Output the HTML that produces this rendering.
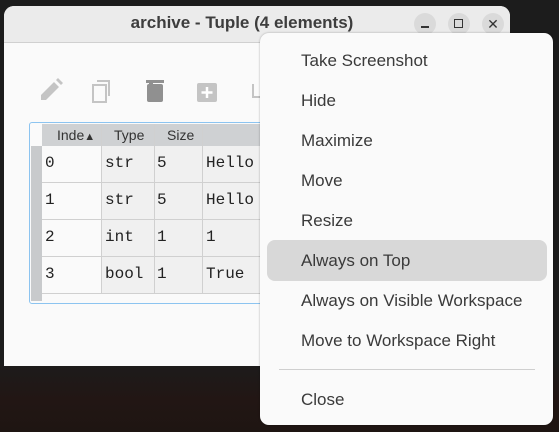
<!DOCTYPE html>
<html><head><style>
body{margin:0;width:559px;height:432px;overflow:hidden;background:linear-gradient(#1c1c1c 0,#1c1c1c 360px,#221614 400px,#1e1512 432px);font-family:"Liberation Sans",sans-serif;position:relative}
.win{position:absolute;left:4px;top:6px;width:506px;height:360px;background:#fafafa;border-radius:10px 10px 0 0;overflow:hidden}
.tb{height:36px;background:#ebebeb;border-bottom:1px solid #d0d0d0;text-align:center;font-weight:bold;font-size:17px;color:#3d3d3d;line-height:34px;padding-right:30px}
.btn{position:absolute;top:7px;width:22px;height:22px;border-radius:50%;background:#dadada}
.tbl{position:absolute;left:25px;top:116px;width:300px;height:180px;border:1px solid #8cc4f0;border-radius:3px;background:#fafafa}
.cell{position:absolute;font-family:"Liberation Mono",monospace;font-size:16px;color:#222}
.menu{position:absolute;left:260px;top:33px;width:293px;height:392px;background:#fafafa;border-radius:9px;box-shadow:0 0 2px rgba(0,0,0,.3)}
.mi{position:absolute;left:41px;font-size:17px;color:#3a3a3a}
.hd{position:absolute;top:4px;font-size:14px;color:#333}
</style></head><body>
<div class="win">
<div class="tb">archive - Tuple (4 elements)</div>
<div class="btn" style="left:410px"><div style="position:absolute;left:7px;top:13px;width:8px;height:1.5px;background:#333"></div></div>
<div class="btn" style="left:444px"><div style="position:absolute;left:6px;top:6px;width:7px;height:7px;border:1.5px solid #333"></div></div>
<div class="btn" style="left:478px;text-align:center;line-height:22px;font-size:14px;color:#333">✕</div>
<svg style="position:absolute;left:36px;top:72px" width="230" height="26">
<path d="M1 22 L1 17 L14 4 L19 9 L6 22 Z M16 2 L18 0 L23 5 L21 7 Z" fill="#c4c4c4"/>
<rect x="53" y="7" width="13" height="17" fill="none" stroke="#c4c4c4" stroke-width="2"/>
<path d="M57 3 H69 V18" fill="none" stroke="#c4c4c4" stroke-width="2"/>
<rect x="106" y="2" width="18" height="3" fill="#909090"/><rect x="109" y="4" width="4" height="2" fill="#909090"/><rect x="107" y="6" width="16" height="18" rx="2" fill="#909090"/>
<rect x="157" y="5" width="20" height="19" rx="2" fill="#c4c4c4"/>
<path d="M167 9 V20 M161.5 14.5 H172.5" stroke="#fff" stroke-width="2.5"/>
<path d="M213 6 V19 H222" fill="none" stroke="#c4c4c4" stroke-width="2"/>
</svg>
<div class="tbl">
<div style="position:absolute;left:1px;top:23px;width:11px;height:155px;background:#c8cacc"></div>
<div style="position:absolute;left:12px;top:1px;width:288px;height:22px;background:#cfd1d3"></div>
<div style="position:absolute;left:12px;top:23px;width:60px;height:148px;background:#fafafa"></div>
<div style="position:absolute;left:72px;top:23px;width:228px;height:148px;background:#f0f0f0"></div>
<div style="position:absolute;left:71px;top:1px;width:1px;height:170px;background:#d0d0d0"></div>
<div style="position:absolute;left:124px;top:1px;width:1px;height:170px;background:#d0d0d0"></div>
<div style="position:absolute;left:172px;top:1px;width:1px;height:170px;background:#d0d0d0"></div>
<div style="position:absolute;left:12px;top:59px;width:288px;height:1px;background:#d0d0d0"></div>
<div style="position:absolute;left:12px;top:96px;width:288px;height:1px;background:#d0d0d0"></div>
<div style="position:absolute;left:12px;top:133px;width:288px;height:1px;background:#d0d0d0"></div>
<div style="position:absolute;left:12px;top:170px;width:288px;height:1px;background:#d0d0d0"></div>
<div class="hd" style="left:27px">Inde<span style="font-size:11px">▲</span></div>
<div class="hd" style="left:84px">Type</div>
<div class="hd" style="left:137px">Size</div>
<div class="cell" style="left:15px;top:31px">0</div><div class="cell" style="left:75px;top:31px">str</div><div class="cell" style="left:127px;top:31px">5</div><div class="cell" style="left:176px;top:31px">Hello</div>
<div class="cell" style="left:15px;top:68px">1</div><div class="cell" style="left:75px;top:68px">str</div><div class="cell" style="left:127px;top:68px">5</div><div class="cell" style="left:176px;top:68px">Hello</div>
<div class="cell" style="left:15px;top:105px">2</div><div class="cell" style="left:75px;top:105px">int</div><div class="cell" style="left:127px;top:105px">1</div><div class="cell" style="left:176px;top:105px">1</div>
<div class="cell" style="left:15px;top:142px">3</div><div class="cell" style="left:75px;top:142px">bool</div><div class="cell" style="left:127px;top:142px">1</div><div class="cell" style="left:176px;top:142px">True</div>
</div>
</div>
<div class="menu">
<div style="position:absolute;left:7px;top:207px;width:280px;height:41px;border-radius:8px;background:#d8d8d8"></div>
<div class="mi" style="top:18px">Take Screenshot</div>
<div class="mi" style="top:58px">Hide</div>
<div class="mi" style="top:98px">Maximize</div>
<div class="mi" style="top:138px">Move</div>
<div class="mi" style="top:178px">Resize</div>
<div class="mi" style="top:218px">Always on Top</div>
<div class="mi" style="top:258px">Always on Visible Workspace</div>
<div class="mi" style="top:298px">Move to Workspace Right</div>
<div style="position:absolute;left:19px;top:336px;width:256px;height:1px;background:#cfcfcf"></div>
<div class="mi" style="top:357px">Close</div>
</div>
</body></html>
